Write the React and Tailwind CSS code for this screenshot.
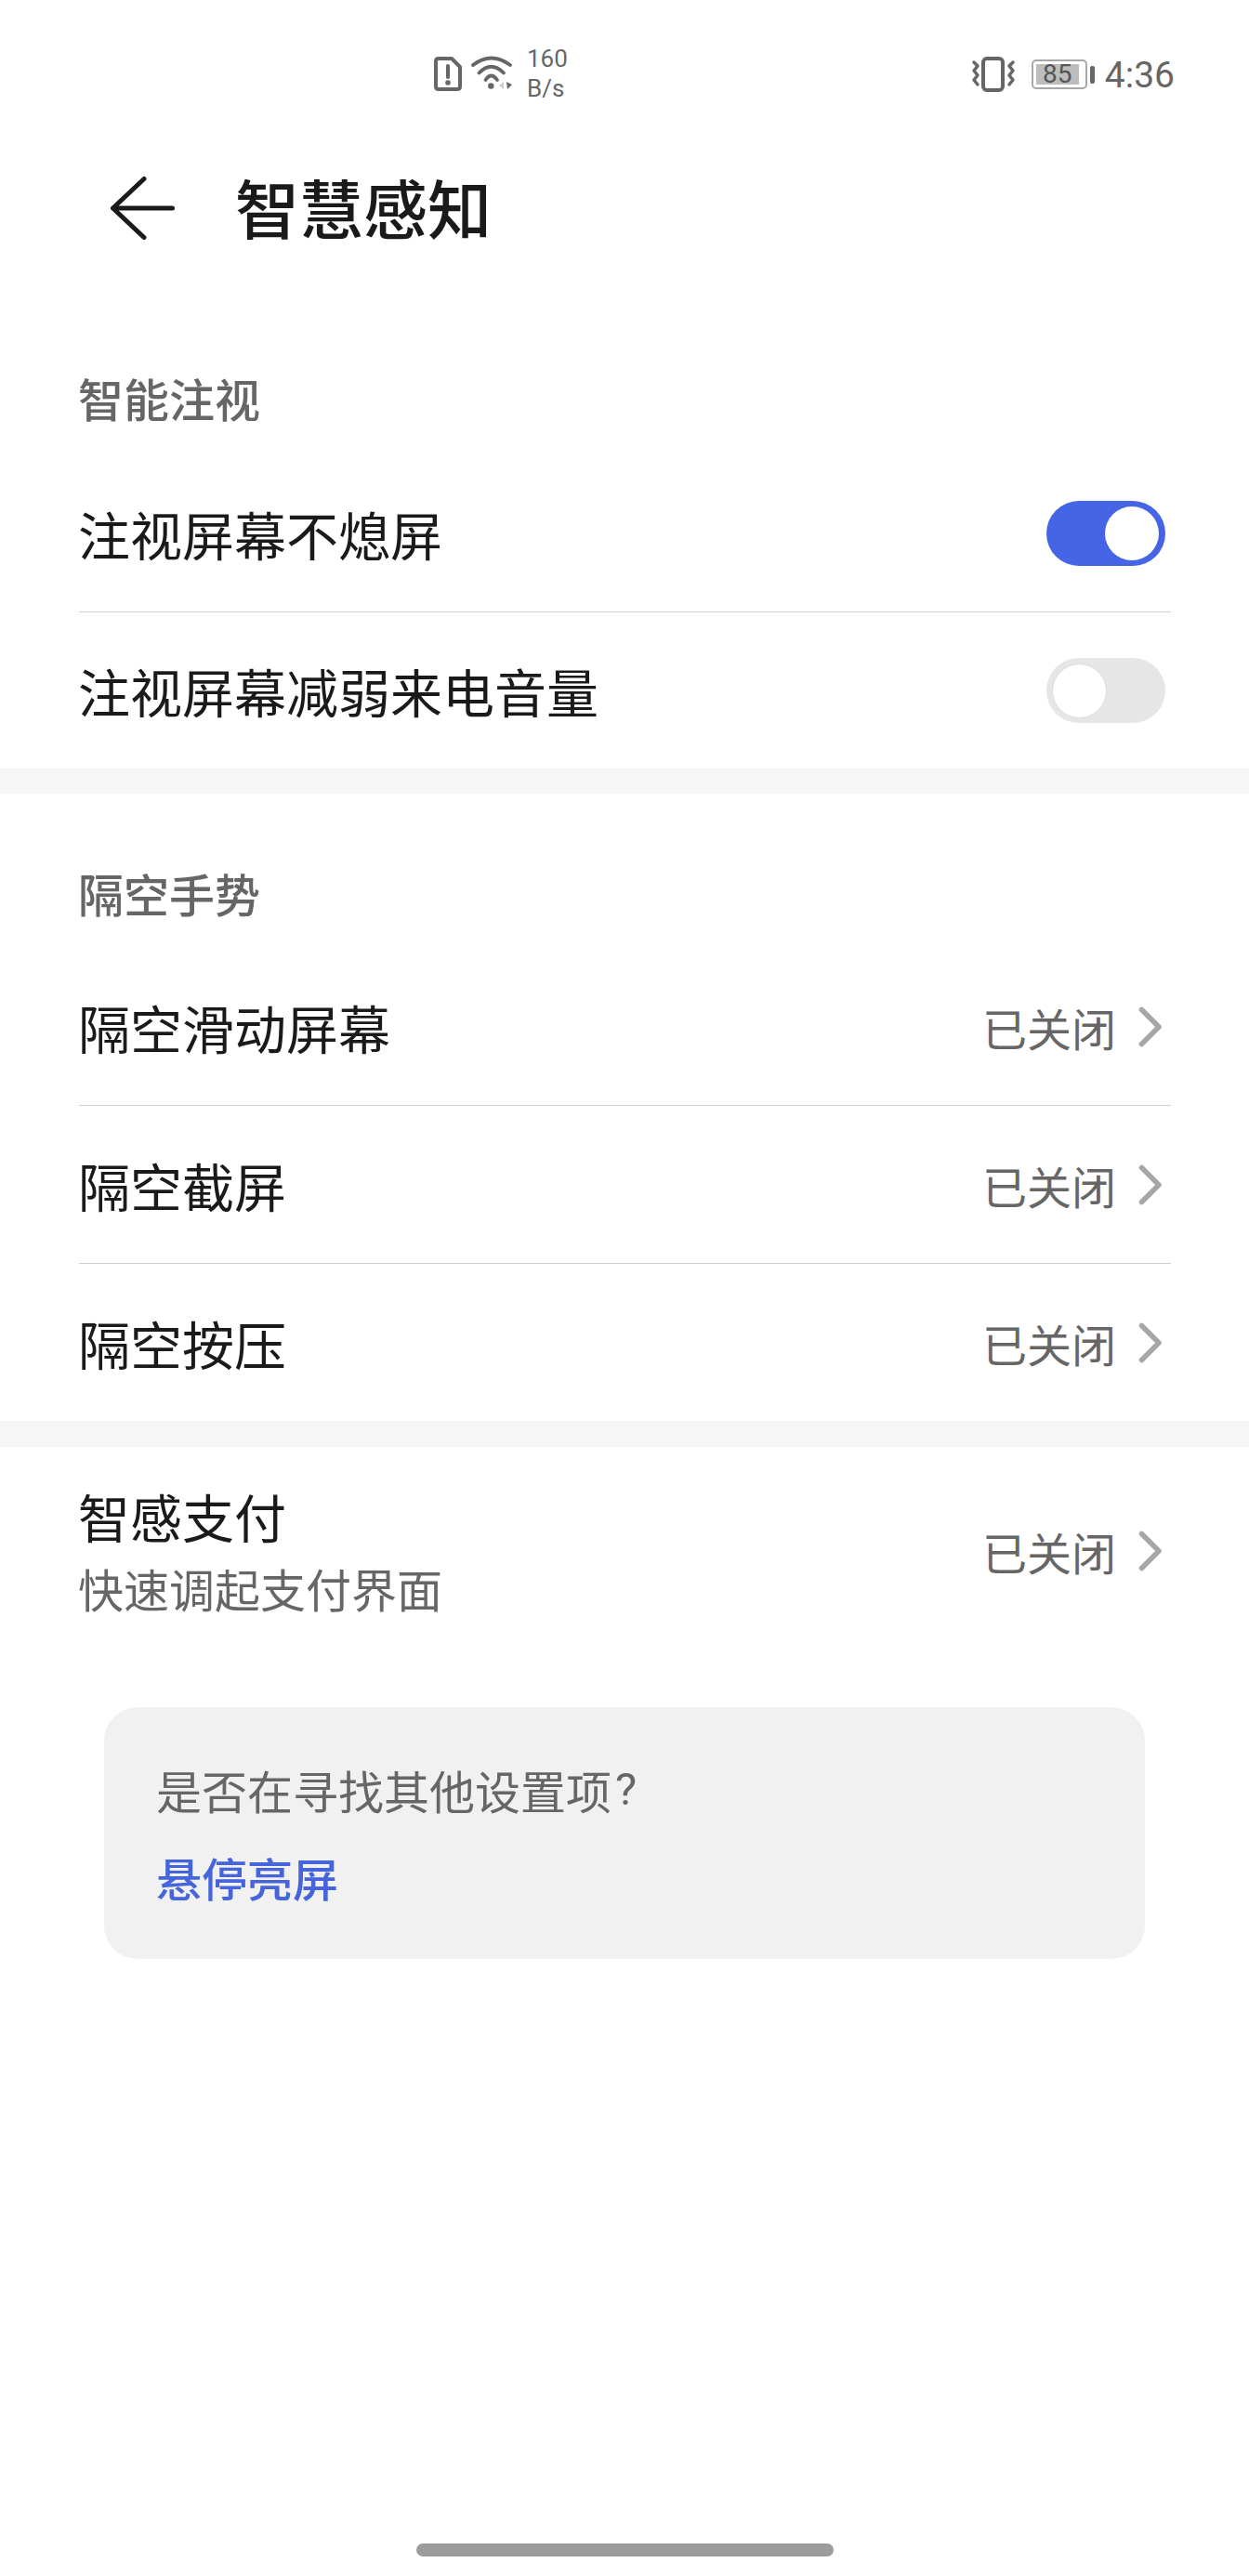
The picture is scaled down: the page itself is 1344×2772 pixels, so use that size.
import React from "react";

const CJK = { fontFamily: '"Noto Sans CJK SC", "Noto Sans", sans-serif' };

function Chevron() {
  return (
    <svg width="26" height="44" viewBox="0 0 26 44" fill="none" stroke="#a6a6a6" strokeWidth="5.5" strokeLinecap="round" strokeLinejoin="round">
      <path d="M3.5 3.5 L22 22 L3.5 40.5" />
    </svg>
  );
}

function Toggle({ on }) {
  return (
    <div className={on ? "flex h-[70px] w-[128px] items-center justify-end rounded-full bg-[#4664e6] pr-[7px]" : "flex h-[70px] w-[128px] items-center justify-start rounded-full bg-[#e6e6e6] pl-[6px]"}>
      <div className={on ? "h-[58px] w-[58px] rounded-full bg-white" : "h-[59px] w-[59px] rounded-full border border-[#dcdcdc] bg-white"} />
    </div>
  );
}

function ToggleRow({ label, on, divider }) {
  return (
    <div className={divider ? "flex h-[170px] items-center justify-between border-b border-[#d0d0d0] pr-[6px]" : "flex h-[168px] items-center justify-between pr-[6px]"}>
      <span className="-ml-[1px] text-[56px] leading-none text-[#1a1a1a]">{label}</span>
      <Toggle on={on} />
    </div>
  );
}

function NavRow({ label, divider }) {
  return (
    <div className={divider ? "flex h-[170px] items-center justify-between border-b border-[#d0d0d0] pr-[9px]" : "flex h-[169px] items-center justify-between pr-[9px]"}>
      <span className="-ml-[1px] text-[56px] leading-none text-[#1a1a1a]">{label}</span>
      <Status />
    </div>
  );
}

function Status() {
  return (
    <div className="flex items-center gap-[24px]">
      <span className="text-[48px] leading-none text-[#666666]">已关闭</span>
      <Chevron />
    </div>
  );
}

export default function App() {
  return (
    <div className="relative flex h-[2772px] w-[1344px] flex-col bg-white" style={CJK}>
      {/* status bar */}
      <div className="flex h-[156px] items-start justify-between pl-[466px] pr-[80px] pt-[47px]">
        <div className="flex items-center gap-[9px]">
          <svg width="32" height="40" viewBox="0 0 32 40" fill="none">
            <path d="M6 4 H20 L29 13 V34 Q29 37 26 37 H6 Q3 37 3 34 V7 Q3 4 6 4 Z" stroke="#666" strokeWidth="4" strokeLinejoin="round" />
            <path d="M16 12 V24" stroke="#666" strokeWidth="4" strokeLinecap="round" />
            <circle cx="16" cy="30" r="2.8" fill="#666" />
          </svg>
          <svg width="46" height="40" viewBox="0 0 46 40" fill="none" stroke="#666" strokeWidth="3.8" strokeLinecap="round">
            <path d="M2 11 Q21.5 -4 42 11" />
            <path d="M8.5 19.5 Q21.5 6 35 19.5" />
            <path d="M15.5 27 Q21.5 18 28 27" />
            <circle cx="21.3" cy="33.5" r="3.2" fill="#666" stroke="none" />
            <path d="M30 33 L35 29 L35 37 Z" fill="#ccc" stroke="none" />
            <path d="M38 29 L44 32 L39 37 Z" fill="#666" stroke="none" />
          </svg>
          <div className="ml-[5px] flex flex-col text-[26px] leading-[32px] text-[#666666]" style={{ fontFamily: "Roboto, sans-serif" }}>
            <span>160</span>
            <span>B/s</span>
          </div>
        </div>
        <div className="flex items-center gap-[11px] pt-[12px]">
          <svg width="48" height="40" viewBox="0 0 48 40" fill="none" stroke="#666" strokeLinecap="round" strokeLinejoin="round">
            <rect x="13" y="3" width="21" height="34" rx="4" strokeWidth="4" />
            <path d="M3 7 L7 11 L3 16 L7 21 L3 26 L7 31" strokeWidth="3.5" />
            <path d="M45 7 L41 11 L45 16 L41 21 L45 26 L41 31" strokeWidth="3.5" />
          </svg>
          <div className="ml-[6px] flex items-center gap-[3px]">
            <div className="flex h-[32px] w-[60px] items-stretch rounded-[5px] border-2 border-[#a8a8a8] p-[3px]">
              <div className="flex w-[46px] items-center justify-center bg-[#bdbdbd] text-[28px] leading-none text-[#555555]" style={{ fontFamily: "Roboto, sans-serif" }}>85</div>
            </div>
            <div className="h-[19px] w-[5px] rounded-[2px] bg-[#666666]" />
          </div>
          <span className="pt-[3px] text-[39px] leading-none text-[#666666]" style={{ fontFamily: "Roboto, sans-serif" }}>4:36</span>
        </div>
      </div>

      {/* title bar */}
      <div className="flex h-[140px] items-center pb-[4px] pl-[117px]">
        <svg width="74" height="74" viewBox="0 0 74 74" fill="none" stroke="#1a1a1a" strokeWidth="5" strokeLinecap="round" strokeLinejoin="round">
          <path d="M38 5.5 L4.5 37 L38 68.5 M4.5 37 H68.5" />
        </svg>
        <span className="ml-[62px] pb-[4px] text-[69px] font-medium leading-none text-[#1a1a1a]">智慧感知</span>
      </div>

      <div className="pl-[85px] pr-[84px]">
        <div className="h-[81px]" />
        <div className="-ml-[1px] flex h-[112px] items-end pb-[37px] text-[49px] font-medium leading-none text-[#666666]">智能注视</div>
        <ToggleRow label="注视屏幕不熄屏" on divider />
        <ToggleRow label="注视屏幕减弱来电音量" />
      </div>

      <div className="h-[27px] bg-[#f6f6f6]" />

      <div className="pl-[85px] pr-[84px]">
        <div className="-ml-[1px] flex h-[166px] items-end pb-[35px] text-[49px] font-medium leading-none text-[#666666]">隔空手势</div>
        <NavRow label="隔空滑动屏幕" divider />
        <NavRow label="隔空截屏" divider />
        <NavRow label="隔空按压" />
      </div>

      <div className="h-[28px] bg-[#f6f6f6]" />

      <div className="flex h-[212px] items-center justify-between pl-[84px] pr-[93px] pt-[12px]">
        <div className="flex flex-col gap-[2px] pt-[2px]">
          <span className="text-[56px] leading-[76px] text-[#1a1a1a]">智感支付</span>
          <span className="text-[49px] leading-[76px] text-[#666666]">快速调起支付界面</span>
        </div>
        <Status />
      </div>

      <div className="mx-[112px] mt-[68px] flex h-[271px] flex-col justify-center gap-[30px] rounded-[36px] bg-[#f1f1f1] px-[56px]">
        <div className="flex items-center text-[49px] leading-[64px] text-[#666666]">
          是否在寻找其他设置项<span className="ml-[4px]" style={{ fontFamily: "Roboto, sans-serif" }}>?</span>
        </div>
        <div className="text-[49px] font-medium leading-[64px] text-[#4664dc]">悬停亮屏</div>
      </div>

      <div className="mb-[21px] mt-auto h-[14px] w-[449px] self-center rounded-full bg-[#9c9c9c]" />
    </div>
  );
}
